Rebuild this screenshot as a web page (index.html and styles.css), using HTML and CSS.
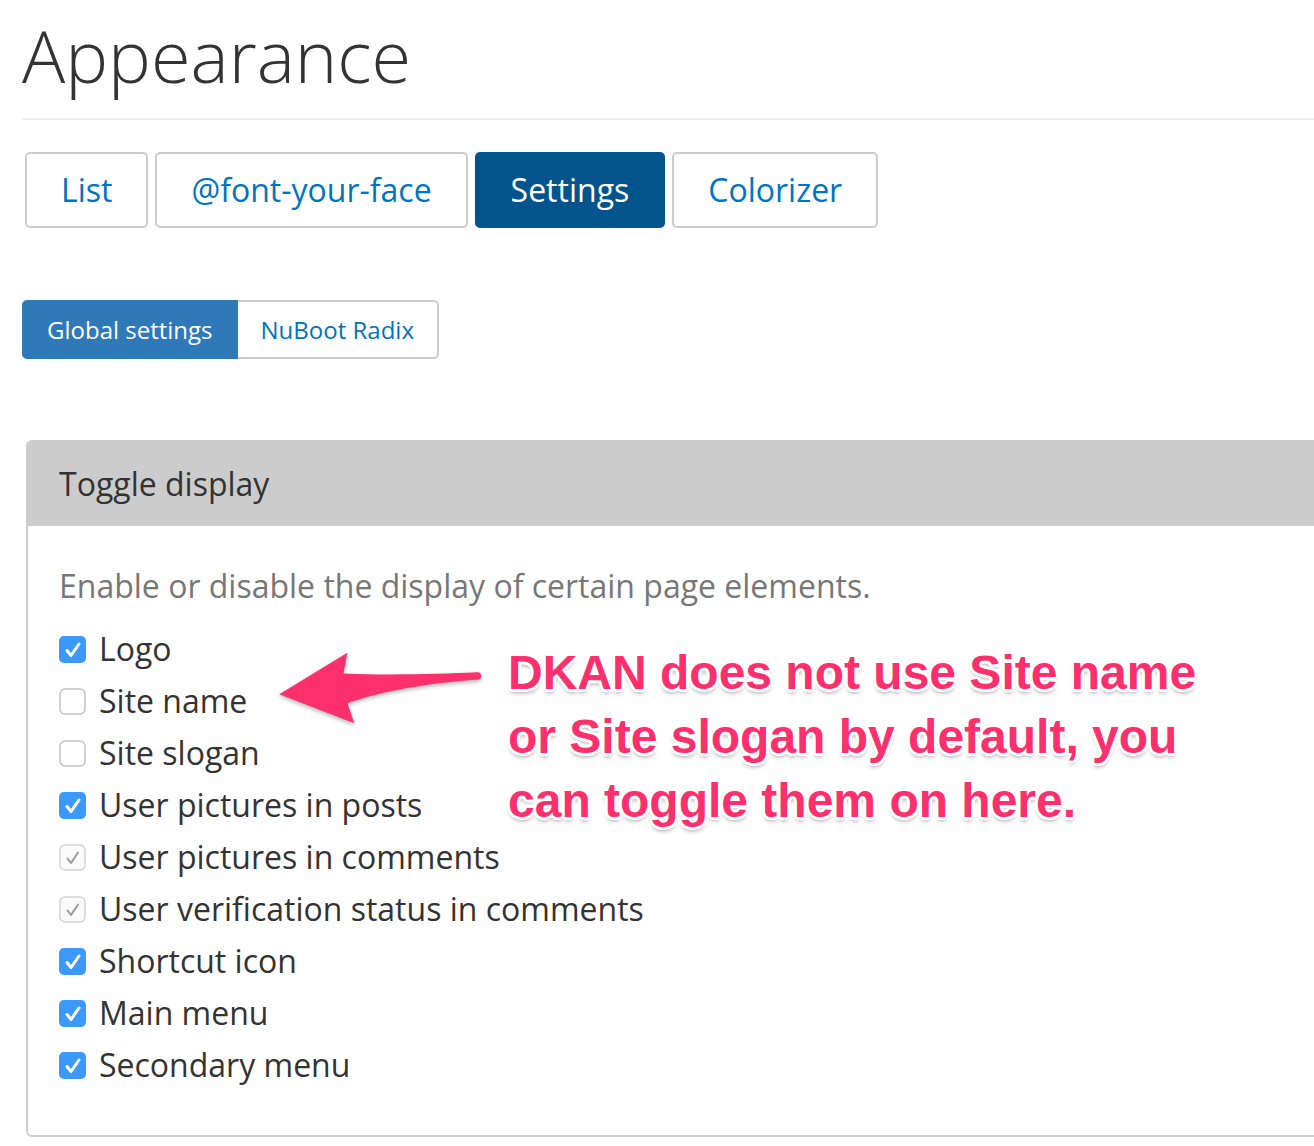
FILE: index.html
```html
<!DOCTYPE html>
<html lang="en">
<head>
<meta charset="utf-8">
<title>Appearance</title>
<link rel="stylesheet" href="styles.css">
</head>
<body>
<div class="page">
  <header class="page-header">
    <h1 class="title">Appearance</h1>
  </header>
  <nav class="tabs">
    <a class="tab">List</a>
    <a class="tab">@font-your-face</a>
    <a class="tab active">Settings</a>
    <a class="tab">Colorizer</a>
  </nav>
  <nav class="subtabs">
    <a class="subtab active">Global settings</a>
    <a class="subtab">NuBoot Radix</a>
  </nav>
  <section class="panel">
    <div class="panel-heading">Toggle display</div>
    <div class="panel-body">
      <p class="desc">Enable or disable the display of certain page elements.</p>
      <ul class="checks">
        <li class="check"><svg class="cb" width="27" height="27" viewBox="0 0 27 27"><rect class="cb-on" x="0" y="0" width="27" height="27" rx="5"/><path class="tick-on" d="M8 14.5 L12 19.5 L20 8"/></svg><span>Logo</span></li>
        <li class="check"><svg class="cb" width="27" height="27" viewBox="0 0 27 27"><rect class="cb-off" x="1" y="1" width="25" height="25" rx="5"/></svg><span>Site name</span></li>
        <li class="check"><svg class="cb" width="27" height="27" viewBox="0 0 27 27"><rect class="cb-off" x="1" y="1" width="25" height="25" rx="5"/></svg><span>Site slogan</span></li>
        <li class="check"><svg class="cb" width="27" height="27" viewBox="0 0 27 27"><rect class="cb-on" x="0" y="0" width="27" height="27" rx="5"/><path class="tick-on" d="M8 14.5 L12 19.5 L20 8"/></svg><span>User pictures in posts</span></li>
        <li class="check"><svg class="cb" width="27" height="27" viewBox="0 0 27 27"><rect class="cb-dis" x="1" y="1" width="25" height="25" rx="5"/><path class="tick-dis" d="M8.5 14.5 L12 19 L19 8.5"/></svg><span>User pictures in comments</span></li>
        <li class="check"><svg class="cb" width="27" height="27" viewBox="0 0 27 27"><rect class="cb-dis" x="1" y="1" width="25" height="25" rx="5"/><path class="tick-dis" d="M8.5 14.5 L12 19 L19 8.5"/></svg><span>User verification status in comments</span></li>
        <li class="check"><svg class="cb" width="27" height="27" viewBox="0 0 27 27"><rect class="cb-on" x="0" y="0" width="27" height="27" rx="5"/><path class="tick-on" d="M8 14.5 L12 19.5 L20 8"/></svg><span>Shortcut icon</span></li>
        <li class="check"><svg class="cb" width="27" height="27" viewBox="0 0 27 27"><rect class="cb-on" x="0" y="0" width="27" height="27" rx="5"/><path class="tick-on" d="M8 14.5 L12 19.5 L20 8"/></svg><span>Main menu</span></li>
        <li class="check"><svg class="cb" width="27" height="27" viewBox="0 0 27 27"><rect class="cb-on" x="0" y="0" width="27" height="27" rx="5"/><path class="tick-on" d="M8 14.5 L12 19.5 L20 8"/></svg><span>Secondary menu</span></li>
      </ul>
    </div>
  </section>
</div>

<svg class="arrow" width="220" height="100" viewBox="0 0 220 100">
  <path d="M9.3 54.3 L77.3 12.7 L73.5 33.5 C120 35.5 170 34 207 32.3 A3.6 3.6 0 0 1 208 39.5 C160 43 110 51 77.5 63.3 L84.3 83.3 Z"/>
</svg>
<div class="note">DKAN does not use Site name<br>or Site slogan by default, you<br>can toggle them on here.</div>
</body>
</html>
```

FILE: styles.css
```css
html, body {
  margin: 0;
  padding: 0;
}

body {
  position: relative;
  width: 1314px;
  height: 1146px;
  overflow: hidden;
  background: #fff;
  color: #333;
  font-family: "Open Sans", "DejaVu Sans", sans-serif;
}

.page {
  padding: 15px 0 0 22px;
}

.page-header {
  padding-bottom: 23px;
  border-bottom: 2px solid #eee;
}

.title {
  margin: 0;
  font-size: 72px;
  font-weight: 300;
  line-height: 80px;
  color: #333;
}

.tabs {
  display: flex;
  gap: 7px;
  margin: 32px 0 0 3px;
}

.tab {
  display: block;
  padding: 14px 34px;
  border: 2px solid #ccc;
  border-radius: 5px;
  font-size: 32px;
  line-height: 44px;
  color: #0074bd;
}

.tab.active {
  background: #03548c;
  border-color: #03548c;
  color: #fff;
}

.subtabs {
  display: flex;
  margin-top: 72px;
}

.subtab {
  display: block;
  padding: 11px 23px;
  border: 2px solid #ccc;
  font-size: 24px;
  line-height: 33px;
  color: #0074bd;
}

.subtab.active {
  background: #3079b8;
  border-color: #3079b8;
  border-radius: 5px 0 0 5px;
  color: #fff;
}

.subtab:last-child {
  border-left: 0;
  border-radius: 0 5px 5px 0;
}

.panel {
  margin: 81px -40px 0 4px;
  border: 2px solid #ccc;
  border-radius: 6px;
  overflow: hidden;
}

.panel-heading {
  padding: 0 31px;
  background: #ccc;
  font-size: 32px;
  line-height: 83px;
  padding-bottom: 1px;
  color: #333;
}

.panel-body {
  padding: 38px 31px 44px;
}

.desc {
  margin: 0 0 15px;
  font-size: 32px;
  line-height: 44px;
  color: #777;
}

.checks {
  margin: 0;
  padding: 0;
  list-style: none;
}

.check {
  display: flex;
  align-items: center;
  gap: 13px;
  font-size: 32px;
  line-height: 52px;
  color: #333;
}

.cb {
  display: block;
  flex: none;
}

.cb-on {
  fill: #3b99fc;
}

.cb-off {
  fill: #fff;
  stroke: #c2c2c2;
  stroke-width: 1.5;
}

.cb-dis {
  fill: #fafafa;
  stroke: #d4d4d4;
  stroke-width: 1.5;
}

.tick-on {
  fill: none;
  stroke: #fff;
  stroke-width: 3;
  stroke-linecap: round;
  stroke-linejoin: round;
}

.tick-dis {
  fill: none;
  stroke: #9a9a9a;
  stroke-width: 2;
  stroke-linecap: round;
  stroke-linejoin: round;
}

.arrow {
  position: absolute;
  left: 270px;
  top: 640px;
  overflow: visible;
  filter: drop-shadow(0 2px 2px rgba(0, 0, 0, 0.3));
}

.arrow path {
  fill: #fe2f6d;
}

.note {
  position: absolute;
  left: 508px;
  top: 641px;
  font-family: "Liberation Sans", Arial, sans-serif;
  font-weight: bold;
  font-size: 48px;
  line-height: 64px;
  color: #fe2f6d;
  white-space: nowrap;
  text-shadow:
    3px 0 0 #fff, -3px 0 0 #fff, 0 3px 0 #fff, 0 -3px 0 #fff,
    2px 2px 0 #fff, -2px 2px 0 #fff, 2px -2px 0 #fff, -2px -2px 0 #fff,
    0 4px 4px rgba(0, 0, 0, 0.35);
}
```
